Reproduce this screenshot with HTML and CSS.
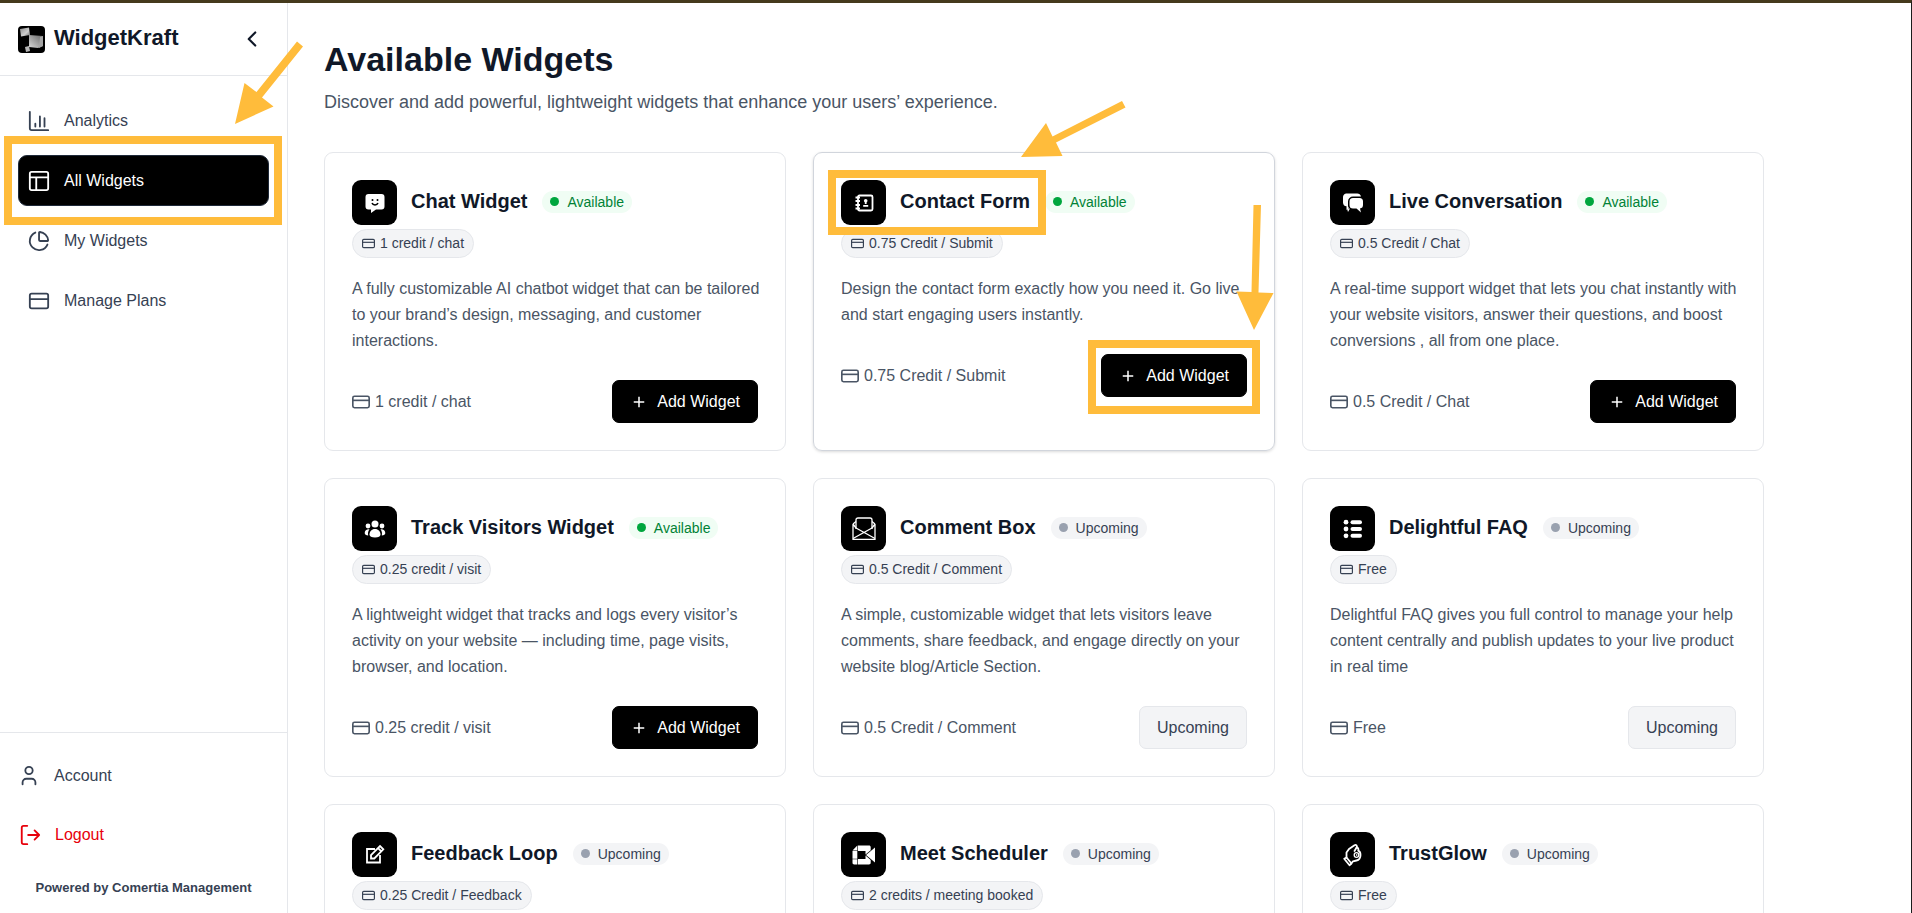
FILE: index.html
```html
<!DOCTYPE html>
<html lang="en">
<head>
    <meta charset="UTF-8">
    <meta name="viewport" content="width=device-width, initial-scale=1.0">
    <title>WidgetKraft - Available Widgets</title>
    <link rel="stylesheet" href="styles.css">
</head>
<body>
    <!-- Shared icons -->
    <svg class="sprite" aria-hidden="true">
        <symbol id="icon-credit" viewBox="1 1 22 22">
            <rect x="2" y="5" width="20" height="14" rx="2"/>
            <path d="M2 10h20"/>
        </symbol>
        <symbol id="icon-plus" viewBox="0 0 24 24">
            <path d="M5 12h14M12 5v14"/>
        </symbol>
    </svg>

    <aside class="sidebar">
        <div class="sidebar-header">
            <svg class="logo" viewBox="0 0 27 27">
                <defs>
                    <linearGradient id="logoLight" x1="0" y1="0" x2="1" y2="1">
                        <stop offset="0" stop-color="#8a8a8a"/>
                        <stop offset="0.6" stop-color="#cfcfcf"/>
                        <stop offset="1" stop-color="#6a6a6a"/>
                    </linearGradient>
                    <linearGradient id="logoDark" x1="0" y1="1" x2="1" y2="0">
                        <stop offset="0" stop-color="#d8d8d8"/>
                        <stop offset="1" stop-color="#666666"/>
                    </linearGradient>
                </defs>
                <rect width="27" height="27" rx="4" fill="#000"/>
                <path d="M2 3l9-1.500 1 7.500-9 1.500z" fill="url(#logoLight)"/>
                <path d="M11 9l14 1v10l-5 2-9-1z" fill="url(#logoDark)"/>
                <path d="M22 11l3-1v10l-4 2z" fill="#a5a5a5"/>
                <path d="M7 21l4-1 1 5-4 1z" fill="#b5b5b5"/>
            </svg>
            <span class="brand">WidgetKraft</span>
            <button type="button" class="collapse" aria-label="Collapse sidebar">
                <svg viewBox="0 0 24 24"><path d="M15 18l-6-6 6-6"/></svg>
            </button>
        </div>

        <nav class="nav">
            <a href="#" class="nav-link">
                <svg viewBox="0 0 24 24"><path d="M2 2v18a2 2 0 0 0 2 2h18M8 18v-3M13 18V7M18 18v-9"/></svg>
                Analytics
            </a>
            <a href="#" class="nav-link active">
                <svg viewBox="0 0 24 24"><rect x="2" y="2" width="20" height="20" rx="2"/><path d="M2 8h20M9 8v14"/></svg>
                All Widgets
            </a>
            <a href="#" class="nav-link">
                <svg viewBox="0 0 24 24"><path d="M21 12c.6 0 1-.4.950-.950a10 10 0 0 0-8.900-8.900c-.550-.060-1 .4-1 .950V11a1 1 0 0 0 1 1z"/><path d="M21.200 15.900A10 10 0 1 1 8 2.800"/></svg>
                My Widgets
            </a>
            <a href="#" class="nav-link">
                <svg viewBox="0 0 24 24"><rect x="2" y="4" width="20" height="16" rx="2"/><path d="M2 10h20"/></svg>
                Manage Plans
            </a>
        </nav>

        <div class="sidebar-footer">
            <a href="#" class="footer-link">
                <svg viewBox="0 0 24 24"><path d="M19 21v-2a4 4 0 0 0-4-4H9a4 4 0 0 0-4 4v2"/><circle cx="12" cy="6" r="4"/></svg>
                Account
            </a>
            <button type="button" class="footer-link logout">
                <svg viewBox="0 0 24 24"><path d="M9 22H5a2 2 0 0 1-2-2V4a2 2 0 0 1 2-2h4M17 17l5-5-5-5M22 12H10"/></svg>
                Logout
            </button>
            <p class="powered">Powered by Comertia Management</p>
        </div>
    </aside>

    <main class="content">
        <h1>Available Widgets</h1>
        <p class="subtitle">Discover and add powerful, lightweight widgets that enhance your users’ experience.</p>

        <div class="cards">
            <article class="card">
                <div class="card-head">
                    <span class="card-icon">
                        <svg viewBox="0 0 24 24">
                            <path fill="#fff" d="M5.500 3h13A3 3 0 0 1 21.500 6v9.500a3 3 0 0 1-3 3H13L8 22v-3.500H5.500a3 3 0 0 1-3-3V6a3 3 0 0 1 3-3z"/>
                            <circle cx="9.500" cy="9" r="1" fill="#000"/><circle cx="14.500" cy="9" r="1" fill="#000"/>
                            <path d="M9 12c1 2.600 5 2.600 6 0" fill="none" stroke="#000" stroke-width="1.500"/>
                        </svg>
                    </span>
                    <h2>Chat Widget</h2>
                    <span class="badge available">Available</span>
                </div>
                <span class="pill"><svg><use href="#icon-credit"/></svg>1 credit / chat</span>
                <p class="card-text">A fully customizable AI chatbot widget that can be tailored to your brand’s design, messaging, and customer interactions.</p>
                <div class="card-foot">
                    <span class="price"><svg><use href="#icon-credit"/></svg>1 credit / chat</span>
                    <button type="button" class="btn"><svg><use href="#icon-plus"/></svg>Add Widget</button>
                </div>
            </article>

            <article class="card hovered">
                <div class="card-head">
                    <span class="card-icon">
                        <svg viewBox="0 0 24 24" fill="none" stroke="#fff" stroke-width="1.800">
                            <rect x="6" y="4.500" width="14.500" height="15" rx="1.500"/>
                            <path d="M3.500 6.500H8M3.500 10H8M3.500 14H8M3.500 17.500H8"/>
                            <circle cx="13.700" cy="9.700" r="1.800" fill="#fff" stroke="none"/>
                            <path d="M13.700 11v2M11.200 14.800h5"/>
                        </svg>
                    </span>
                    <h2>Contact Form</h2>
                    <span class="badge available">Available</span>
                </div>
                <span class="pill"><svg><use href="#icon-credit"/></svg>0.75 Credit / Submit</span>
                <p class="card-text">Design the contact form exactly how you need it. Go live and start engaging users instantly.</p>
                <div class="card-foot">
                    <span class="price"><svg><use href="#icon-credit"/></svg>0.75 Credit / Submit</span>
                    <button type="button" class="btn"><svg><use href="#icon-plus"/></svg>Add Widget</button>
                </div>
            </article>

            <article class="card">
                <div class="card-head">
                    <span class="card-icon">
                        <svg viewBox="0 0 24 24" fill="#fff">
                            <path d="M5 2.500h11a4 4 0 0 1 4 3H12a5 5 0 0 0-5 5v4c0 1.200.4 2 1 2.600L5.500 19v-3.700A4 4 0 0 1 2 11.500v-5a4 4 0 0 1 3-4z"/>
                            <path d="M12 7h6.500a3.500 3.500 0 0 1 3.500 3.500v3.500a3.500 3.500 0 0 1-3 3.500l1 4-4.500-4H12a3.500 3.500 0 0 1-3.500-3.500v-3.500A3.500 3.500 0 0 1 12 7z"/>
                            <path d="M6 17.500l3 0-2 3.500z"/>
                        </svg>
                    </span>
                    <h2>Live Conversation</h2>
                    <span class="badge available">Available</span>
                </div>
                <span class="pill"><svg><use href="#icon-credit"/></svg>0.5 Credit / Chat</span>
                <p class="card-text">A real-time support widget that lets you chat instantly with your website visitors, answer their questions, and boost conversions , all from one place.</p>
                <div class="card-foot">
                    <span class="price"><svg><use href="#icon-credit"/></svg>0.5 Credit / Chat</span>
                    <button type="button" class="btn"><svg><use href="#icon-plus"/></svg>Add Widget</button>
                </div>
            </article>

            <article class="card">
                <div class="card-head">
                    <span class="card-icon">
                        <svg viewBox="0 0 24 24" fill="#fff">
                            <circle cx="12" cy="7" r="3.500"/>
                            <circle cx="5" cy="9" r="2.400"/><circle cx="19" cy="9" r="2.400"/>
                            <path d="M12 12c3.500 0 5.500 2.500 5.500 5.500 0 2-2 3-5.500 3s-5.500-1-5.500-3C6.500 14.500 8.500 12 12 12z"/>
                            <path d="M6.500 12.200C5 14 4.800 16 5.200 18.500 3 18.500 1.700 17.600 1.700 16c0-2.500 2-4.200 4.800-3.800zM17.500 12.200c1.500 1.800 1.700 3.800 1.300 6.300 2.200 0 3.500-.9 3.500-2.500 0-2.500-2-4.200-4.800-3.800z"/>
                        </svg>
                    </span>
                    <h2>Track Visitors Widget</h2>
                    <span class="badge available">Available</span>
                </div>
                <span class="pill"><svg><use href="#icon-credit"/></svg>0.25 credit / visit</span>
                <p class="card-text">A lightweight widget that tracks and logs every visitor’s activity on your website — including time, page visits, browser, and location.</p>
                <div class="card-foot">
                    <span class="price"><svg><use href="#icon-credit"/></svg>0.25 credit / visit</span>
                    <button type="button" class="btn"><svg><use href="#icon-plus"/></svg>Add Widget</button>
                </div>
            </article>

            <article class="card">
                <div class="card-head">
                    <span class="card-icon">
                        <svg viewBox="0 0 24 24" fill="none" stroke="#fff" stroke-width="1.300">
                            <path d="M1 7v15.300h22V7M1 7l3-2.500M23 7l-3-2.500M1 7l3 4M23 7l-3 4"/>
                            <path d="M4 12V3c0-1.200.8-2 2-2h12c1.200 0 2 .8 2 2v9"/>
                            <path d="M1 21.500L20 11M23 21.500L4 11"/>
                        </svg>
                    </span>
                    <h2>Comment Box</h2>
                    <span class="badge">Upcoming</span>
                </div>
                <span class="pill"><svg><use href="#icon-credit"/></svg>0.5 Credit / Comment</span>
                <p class="card-text">A simple, customizable widget that lets visitors leave comments, share feedback, and engage directly on your website blog/Article Section.</p>
                <div class="card-foot">
                    <span class="price"><svg><use href="#icon-credit"/></svg>0.5 Credit / Comment</span>
                    <button type="button" class="btn disabled" disabled>Upcoming</button>
                </div>
            </article>

            <article class="card">
                <div class="card-head">
                    <span class="card-icon">
                        <svg viewBox="0 0 24 24" fill="#fff">
                            <circle cx="5" cy="5.200" r="2.400"/><circle cx="5" cy="12" r="2.400"/><circle cx="5" cy="18.800" r="2.400"/>
                            <rect x="9.500" y="3.200" width="11.500" height="4" rx="2"/>
                            <rect x="9.500" y="10" width="11.500" height="4" rx="2"/>
                            <rect x="9.500" y="16.800" width="11.500" height="4" rx="2"/>
                        </svg>
                    </span>
                    <h2>Delightful FAQ</h2>
                    <span class="badge">Upcoming</span>
                </div>
                <span class="pill"><svg><use href="#icon-credit"/></svg>Free</span>
                <p class="card-text">Delightful FAQ gives you full control to manage your help content centrally and publish updates to your live product in real time</p>
                <div class="card-foot">
                    <span class="price"><svg><use href="#icon-credit"/></svg>Free</span>
                    <button type="button" class="btn disabled" disabled>Upcoming</button>
                </div>
            </article>

            <article class="card">
                <div class="card-head">
                    <span class="card-icon">
                        <svg viewBox="0 0 24 24" fill="none" stroke="#fff" stroke-width="1.800">
                            <path d="M12 6H4v13.500h13V12"/>
                            <path d="M8 15.500V12l9-9 3.300 3.300-9 9.200zM15 5l3.300 3.300"/>
                        </svg>
                    </span>
                    <h2>Feedback Loop</h2>
                    <span class="badge">Upcoming</span>
                </div>
                <span class="pill"><svg><use href="#icon-credit"/></svg>0.25 Credit / Feedback</span>
            </article>

            <article class="card">
                <div class="card-head">
                    <span class="card-icon">
                        <svg viewBox="0 0 24 24" fill="#fff">
                            <path d="M5.300 2.500v5H.5zM5.900 2.500H17c1 0 1.700.7 1.700 1.700v3L13.500 11.600V8H5.900z"/>
                            <path d="M.5 8h4.800v7.800H.5zM.5 16.300h4.800v5.200H2.200c-1 0-1.700-.7-1.700-1.700z"/>
                            <path d="M5.900 16h7.600v-3.600l5.200 4.600v2.800c0 1-.7 1.700-1.700 1.700H5.900z"/>
                            <path d="M14 12l9-7.500v15z"/>
                        </svg>
                    </span>
                    <h2>Meet Scheduler</h2>
                    <span class="badge">Upcoming</span>
                </div>
                <span class="pill"><svg><use href="#icon-credit"/></svg>2 credits / meeting booked</span>
            </article>

            <article class="card">
                <div class="card-head">
                    <span class="card-icon">
                        <svg viewBox="0 0 24 24" fill="none" stroke="#fff" stroke-width="1.800" stroke-linejoin="round" stroke-linecap="round">
                            <path d="M5.500 14.500V9.500L8 6l5.500-3.800c1.600-.9 3 .6 2.200 2L13.500 8"/>
                            <path d="M15.700 4.500c1.800.3 2 2 1.500 3.200 1.500.6 2.300 2.300 2.300 4.300 0 3.500-1.500 5-4 5.500l-3.500.8-1.800 2.200"/>
                            <path d="M5.500 14.500l-2.300 1.300L8.500 22.200l2-1.700z"/>
                            <circle cx="15.500" cy="12" r="2.300" stroke-width="1.300"/>
                            <circle cx="15.500" cy="12" r=".3" stroke-width="1"/>
                        </svg>
                    </span>
                    <h2>TrustGlow</h2>
                    <span class="badge">Upcoming</span>
                </div>
                <span class="pill"><svg><use href="#icon-credit"/></svg>Free</span>
            </article>
        </div>
    </main>

    <!-- Walkthrough highlights -->
    <svg class="highlights" aria-hidden="true">
        <rect x="8" y="140" width="270" height="81"/>
        <rect x="832" y="174" width="210" height="57"/>
        <rect x="1092" y="344" width="164" height="66"/>
        <path d="M297 41.500L256.500 92 244.500 83 235 124 273.500 106.500 262 97.500 303 46.500z"/>
        <path d="M1122 101L1052.500 136.500 1046 123 1021 157 1062.500 156 1056 142.500 1125.500 107.500z"/>
        <path d="M1253.500 205L1251.500 292 1236.500 291.500 1254 330 1273.500 293 1258.500 292.500 1261 205z"/>
    </svg>
</body>
</html>
```
FILE: styles.css
```css
* {
    box-sizing: border-box;
}
body {
    font-family: Arial, "Liberation Sans", sans-serif;
    font-size: 16px;
    display: flex;
    height: 100vh;
    margin: 0;
    overflow: hidden;
    color: #101828;
    background-color: #ffffff;
    border-top: 3px solid #453a1c;
    border-right: 1px solid #1c1c1c;
}
h1, h2, p {
    margin: 0;
}
a {
    text-decoration: none;
}
button {
    font: inherit;
    cursor: pointer;
}
svg {
    flex-shrink: 0;
}
.sprite {
    display: none;
}

/* Sidebar */
.sidebar {
    display: flex;
    flex-direction: column;
    flex-shrink: 0;
    width: 288px;
    border-right: 1px solid #e5e7eb;
}
.sidebar-header {
    display: flex;
    align-items: center;
    height: 73px;
    padding: 0 22px 0 18px;
    border-bottom: 1px solid #e5e7eb;
}
.logo {
    width: 27px;
    height: 27px;
    margin-right: 9px;
}
.brand {
    font-size: 22px;
    font-weight: bold;
    line-height: 28px;
    padding-bottom: 2px;
}
.collapse {
    display: flex;
    margin-left: auto;
    padding: 0;
    border: none;
    background: none;
    color: #101828;
}
.collapse svg {
    width: 26px;
    height: 26px;
}
.collapse svg,
.nav-link svg,
.footer-link svg {
    fill: none;
    stroke: currentColor;
    stroke-width: 2;
    stroke-linecap: round;
    stroke-linejoin: round;
}
.nav {
    display: flex;
    flex-direction: column;
    flex: 1;
    gap: 9px;
    padding: 19px 18px;
}
.nav-link {
    display: flex;
    align-items: center;
    gap: 14px;
    height: 51px;
    padding: 0 9px;
    border: 1px solid transparent;
    border-radius: 9px;
    color: #364153;
}
.nav-link svg,
.footer-link svg {
    width: 22px;
    height: 22px;
}
.nav-link.active {
    background-color: #000000;
    border-color: #1e2939;
    color: #ffffff;
}
.sidebar-footer {
    display: flex;
    flex-direction: column;
    gap: 8px;
    padding: 17px 18px 16px;
    border-top: 1px solid #e5e7eb;
}
.footer-link {
    display: flex;
    align-items: center;
    gap: 14px;
    height: 51px;
    padding: 0;
    border: none;
    background: none;
    color: #364153;
}
.footer-link.logout {
    padding: 0 1px;
    color: #e7000b;
}
.powered {
    font-size: 13px;
    font-weight: bold;
    line-height: 18px;
    padding-top: 11px;
    text-align: center;
    color: #364153;
}

/* Main content */
.content {
    flex: 1;
    padding: 36px;
    overflow-y: auto;
    scrollbar-width: none;
}
h1 {
    font-size: 34px;
    line-height: 40px;
}
.subtitle {
    font-size: 18px;
    line-height: 28px;
    margin-top: 9px;
    color: #4a5565;
}
.cards {
    display: grid;
    grid-template-columns: repeat(3, 1fr);
    gap: 27px;
    max-width: 1440px;
    margin-top: 36px;
}
.card {
    padding: 27px;
    border: 1px solid #e5e7eb;
    border-radius: 9px;
}
.card.hovered {
    border-color: #d1d5dc;
    box-shadow: 0 1px 3px rgba(0, 0, 0, 0.15);
}
.card-head {
    display: flex;
    align-items: center;
    margin-bottom: 4px;
}
.card-icon {
    display: flex;
    align-items: center;
    justify-content: center;
    width: 45px;
    height: 45px;
    border-radius: 9px;
    background-color: #000000;
}
.card-icon svg {
    width: 24px;
    height: 24px;
}
.card h2 {
    font-size: 20px;
    line-height: 28px;
    margin: 0 15px 4px 14px;
}
.badge {
    display: flex;
    align-items: center;
    gap: 8px;
    height: 22px;
    margin-bottom: 2px;
    padding: 0 8px;
    border-radius: 11px;
    font-size: 14px;
    background-color: #f3f4f6;
    color: #364153;
}
.badge::before {
    content: "";
    width: 9px;
    height: 9px;
    border-radius: 50%;
    background-color: #99a1af;
}
.badge.available {
    background-color: #f0fdf4;
    color: #008236;
}
.badge.available::before {
    background-color: #00a63e;
}
.pill {
    display: flex;
    align-items: center;
    gap: 5px;
    width: fit-content;
    padding: 4px 9px;
    border: 1px solid #e5e7eb;
    border-radius: 15px;
    font-size: 14px;
    line-height: 19px;
    background-color: #f3f4f6;
    color: #364153;
}
.pill svg,
.price svg {
    fill: none;
    stroke: currentColor;
    stroke-width: 2;
}
.pill svg {
    width: 13px;
    height: 13px;
}
.card-text {
    line-height: 26px;
    margin: 18px -9px 0 0;
    color: #4a5565;
}
.card-foot {
    display: flex;
    align-items: center;
    justify-content: space-between;
    margin-top: 26px;
}
.price {
    display: flex;
    align-items: center;
    gap: 5px;
    color: #4a5565;
}
.price svg {
    width: 18px;
    height: 18px;
}
.btn {
    display: flex;
    align-items: center;
    gap: 9px;
    padding: 8px 17px;
    border: 1px solid #000000;
    border-radius: 7px;
    line-height: 25px;
    background-color: #000000;
    color: #ffffff;
}
.btn svg {
    width: 18px;
    height: 18px;
    fill: none;
    stroke: currentColor;
    stroke-width: 2;
}
.btn.disabled {
    background-color: #f3f4f6;
    border-color: #e5e7eb;
    color: #364153;
    cursor: default;
}

/* Highlight boxes and arrows drawn over the page */
.highlights {
    position: absolute;
    top: 0;
    left: 0;
    width: 100%;
    height: 100%;
    pointer-events: none;
    fill: #ffbc3b;
}
.highlights rect {
    fill: none;
    stroke: #ffbc3b;
    stroke-width: 8;
}
```
